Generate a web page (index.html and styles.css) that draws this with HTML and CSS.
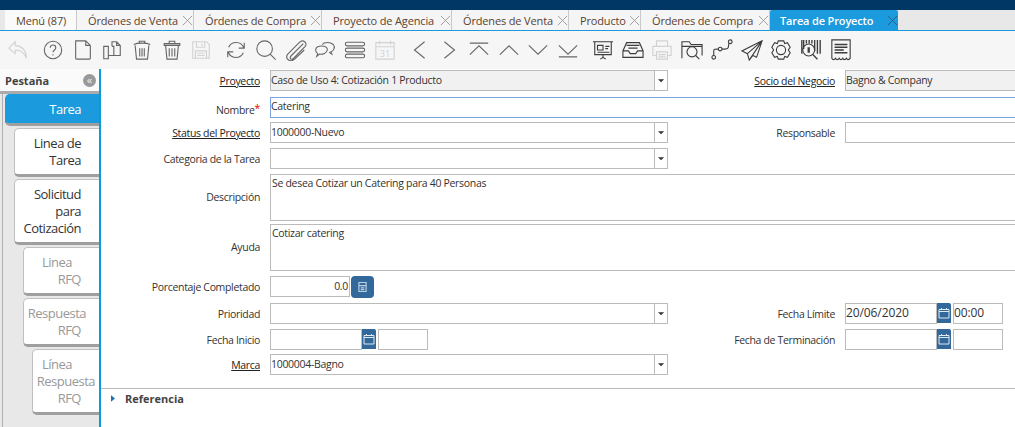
FILE: index.html
```html
<!DOCTYPE html>
<html lang="en">
<head>
    <meta charset="UTF-8">
    <title>Tarea de Proyecto</title>
    <link rel="stylesheet" href="styles.css">
</head>
<body>
    <svg class="defs">
        <symbol id="cal" viewBox="0 0 12 12">
            <path d="M1 2.500h10v8.500H1zM1 4.500h10M3.500 1v2M8.500 1v2" fill="none" stroke="#dfe9f2"/>
        </symbol>
        <symbol id="caret" viewBox="0 0 8 4">
            <path d="M0 0h7L3.500 3.500z" fill="#333"/>
        </symbol>
    </svg>

    <div class="topbar"></div>

    <div class="tabs">
        <div class="tab menu">Menú (87)</div>
        <div class="tab w1">Órdenes de Venta<svg class="x" viewBox="0 0 12 12"><path d="M1 1l10 10M11 1L1 11"/></svg></div>
        <div class="tab w2">Órdenes de Compra<svg class="x" viewBox="0 0 12 12"><path d="M1 1l10 10M11 1L1 11"/></svg></div>
        <div class="tab w3">Proyecto de Agencia<svg class="x" viewBox="0 0 12 12"><path d="M1 1l10 10M11 1L1 11"/></svg></div>
        <div class="tab w1">Órdenes de Venta<svg class="x" viewBox="0 0 12 12"><path d="M1 1l10 10M11 1L1 11"/></svg></div>
        <div class="tab w4">Producto<svg class="x" viewBox="0 0 12 12"><path d="M1 1l10 10M11 1L1 11"/></svg></div>
        <div class="tab w5">Órdenes de Compra<svg class="x" viewBox="0 0 12 12"><path d="M1 1l10 10M11 1L1 11"/></svg></div>
        <div class="tab current">Tarea de Proyecto<svg class="x" viewBox="0 0 12 12"><path d="M1 1l10 10M11 1L1 11"/></svg></div>
    </div>

    <div class="toolbar">
        <div class="tool off"><svg viewBox="0 0 24 24"><path d="M9 3L2 10l7 6v-4c6 0 10 3 12 9 0-8-4-13-12-14z"/></svg></div>
        <div class="tool gap"><svg viewBox="0 0 24 24"><circle cx="12" cy="12" r="9.500"/><path d="M9 9.500c0-4 6-4 6 0 0 2.500-3 2.500-3 5M12 16.500v1.500"/></svg></div>
        <div class="tool"><svg viewBox="0 0 24 24"><path d="M4 2h11l5 5v14a1 1 0 0 1-1 1H5a1 1 0 0 1-1-1zM15 2v5h5"/></svg></div>
        <div class="tool"><svg viewBox="0 0 24 24"><path d="M3 8h5v13.500H3zM8 18h13V7l-4-4h-5v5M17 3v4h4M12 8h2v10"/></svg></div>
        <div class="tool"><svg viewBox="0 0 24 24"><path d="M3 6c4-2 14-2 18 0M9 4.500V2.500h6v2M4.500 7l1.500 15h12l1.500-15M9.500 10v9M12 10v9M14.500 10v9"/></svg></div>
        <div class="tool"><svg viewBox="0 0 24 24"><path d="M3.500 5h17v2h-17zM9 5V2.500h6V5M5 7l1.500 15h11L19 7M9 10v9M12 10v9M15 10v9"/></svg></div>
        <div class="tool off"><svg viewBox="0 0 24 24"><path d="M3 3h15l3 3v15H3zM7 3v6h9V3M13 4.500v3M6 21v-8h12v8M8 15.500h8M8 18h8"/></svg></div>
        <div class="tool gap"><svg viewBox="0 0 24 24"><path d="M21 4v6h-6M3 20v-6h6M20.500 9.500A9 9 0 0 0 4 9M3.500 14.500A9 9 0 0 0 20 15"/></svg></div>
        <div class="tool"><svg viewBox="0 0 24 24"><circle cx="10.500" cy="10.500" r="8.500"/><path d="M16.500 16.500l6 6"/></svg></div>
        <div class="tool"><svg viewBox="0 0 24 24"><path d="M20 5L7 18c-3 3 0 5.500 2.500 3L22 8c3-4-2.500-8-6-4.500L3 16.500c-4 5 3 9.500 7.500 5.500L21 12"/></svg></div>
        <div class="tool"><svg viewBox="0 0 24 24"><path d="M9 6c2-3 9-3 12 0 2.500 3 .5 7-2.500 8l1 2.500-3-2M3 19l1-3c-3-2-3-6 0-7.500 4-2 11-.5 10.500 3.500-.5 3.500-5 5-8.500 4.500z"/></svg></div>
        <div class="tool"><svg viewBox="0 0 24 24"><rect x="1.500" y="3.500" width="21" height="4" rx="2"/><rect x="1.500" y="10" width="21" height="4" rx="2"/><rect x="1.500" y="16.500" width="21" height="4" rx="2"/></svg></div>
        <div class="tool off"><svg viewBox="0 0 24 24"><path d="M2 4h20v18H2zM2 8.500h20M6 2v4M18 2v4"/><text x="12" y="19.500" class="cal-num">31</text></svg></div>
        <div class="tool gap"><svg viewBox="0 0 24 24"><path d="M17 3L6 12l11 9"/></svg></div>
        <div class="tool"><svg viewBox="0 0 24 24"><path d="M7 3l11 9-11 9"/></svg></div>
        <div class="tool"><svg viewBox="0 0 24 24"><path d="M2 4.500h20M2 17L12 7.500 22 17"/></svg></div>
        <div class="tool"><svg viewBox="0 0 24 24"><path d="M2 17L12 7.500 22 17"/></svg></div>
        <div class="tool"><svg viewBox="0 0 24 24"><path d="M2 7l10 9.500L22 7"/></svg></div>
        <div class="tool"><svg viewBox="0 0 24 24"><path d="M2 7l10 9.500L22 7M2 19.500h20"/></svg></div>
        <div class="tool gap dark"><svg viewBox="0 0 24 24"><path d="M1 3h22M3 3v14h18V3M12 17v4M9 22l3-2 3 2M6 7h6v5H6zM14.500 8H19M14.500 10.500h3M6 14.500h13"/></svg></div>
        <div class="tool dark"><svg viewBox="0 0 24 24"><path d="M5 4h14l4 9v7H1v-7zM5 7h14M1 13h6l2 3h6l2-3h6M7 10h10"/></svg></div>
        <div class="tool off"><svg viewBox="0 0 24 24"><path d="M6 8V2h12v6M2 8h20v10h-4M6 18H2V8M6 14h12v8H6zM8 17h8M8 19.500h8"/></svg></div>
        <div class="tool dark"><svg viewBox="0 0 24 24"><path d="M1 21V3h8l2 3h12v12M1 8h22"/><circle cx="12" cy="14" r="5.500"/><path d="M16 18l4 4"/></svg></div>
        <div class="tool dark"><svg viewBox="0 0 24 24"><circle cx="3" cy="20" r="2"/><circle cx="10" cy="11" r="2"/><circle cx="21" cy="3" r="2"/><path d="M3 18v-5c0-2 1-2 5-2M12 11h3c4 0 4-1 4.500-6.500"/></svg></div>
        <div class="tool dark"><svg viewBox="0 0 24 24"><path d="M23 2L1 13l6 3 2 7 4-5 4 2zM23 2L7 16M23 2L9 23"/></svg></div>
        <div class="tool dark"><svg viewBox="0 0 24 24"><path d="M9 2h6l1 3 3-1 3 5-2 3 2 3-3 5-3-1-1 3H9l-1-3-3 1-3-5 2-3-2-3 3-5 3 1z"/><circle cx="12" cy="12" r="5"/></svg></div>
        <div class="tool dark"><svg viewBox="0 0 24 24"><path d="M2 1v15M4 1v10M7 1v4M10 1v4M13 1v4M16 1v12M19 1v15M22 1v15" stroke-width="1.500"/><circle cx="9.500" cy="12" r="6.500"/><path d="M9.500 9v6" stroke-width="2.500"/><path d="M14 17l5 5" stroke-width="1.500"/></svg></div>
        <div class="tool dark"><svg viewBox="0 0 24 24"><path d="M2 1h20v20c-2 2-3 2-4 0-2 2-3 2-4 0-1 2-3 2-4 0-1 2-3 2-4 0-1 2-3 2-4 0z"/><path d="M5 6h14M5 9h14M5 12h10M5 15h14" stroke-width="1.500"/></svg></div>
    </div>

    <div class="content">
        <aside class="side">
            <div class="side-head">
                <b>Pestaña</b>
                <span class="collapse">«</span>
            </div>
            <div class="side-tabs">
                <div class="stab active lvl0"><span>Tarea</span></div>
                <div class="stab lvl1 h2"><span>Linea de</span><span>Tarea</span></div>
                <div class="stab lvl1 h3"><span>Solicitud</span><span>para</span><span>Cotización</span></div>
                <div class="stab lvl2 h2 dim"><span class="in9">Linea</span><span>RFQ</span></div>
                <div class="stab lvl2 h2 dim"><span class="out5">Respuesta</span><span>RFQ</span></div>
                <div class="stab lvl3 h3 dim"><span class="in9">Línea</span><span class="out14">Respuesta</span><span>RFQ</span></div>
            </div>
        </aside>

        <main class="main">
            <form class="form" action="#">
                <label class="lbl link">Proyecto</label>
                <div class="combo ro"><span class="val">Caso de Uso 4: Cotización 1 Producto</span><i class="drop"><svg><use href="#caret"/></svg></i></div>
                <label class="lbl link">Socio del Negocio</label>
                <div class="field ro"><span class="val">Bagno &amp; Company</span></div>

                <label class="lbl">Nombre<em>*</em></label>
                <div class="field focus wide"><span class="val">Catering</span></div>

                <label class="lbl link">Status del Proyecto</label>
                <div class="combo"><span class="val">1000000-Nuevo</span><i class="drop"><svg><use href="#caret"/></svg></i></div>
                <label class="lbl">Responsable</label>
                <div class="field"></div>

                <label class="lbl">Categoria de la Tarea</label>
                <div class="combo full"><i class="drop"><svg><use href="#caret"/></svg></i></div>

                <label class="lbl mid">Descripción</label>
                <div class="field wide area"><span class="val">Se desea Cotizar un Catering para 40 Personas</span></div>

                <label class="lbl mid">Ayuda</label>
                <div class="field wide area"><span class="val">Cotizar catering</span></div>

                <label class="lbl">Porcentaje Completado</label>
                <div class="full num-row">
                    <div class="field num"><span class="val">0.0</span></div>
                    <span class="calc"><svg viewBox="0 0 10 12"><path d="M1 1h8v10H1zM1 4.500h8M3 7h4M3 9h4" fill="none" stroke="#b9cfe2" stroke-width="1.300"/></svg></span>
                </div>

                <label class="lbl">Prioridad</label>
                <div class="combo"><i class="drop"><svg><use href="#caret"/></svg></i></div>
                <label class="lbl">Fecha Límite</label>
                <div class="date-row">
                    <div class="field date big"><span class="val">20/06/2020</span></div>
                    <span class="cal-btn"><svg><use href="#cal"/></svg></span>
                    <div class="field time big"><span class="val">00:00</span></div>
                </div>

                <label class="lbl">Fecha Inicio</label>
                <div class="date-row">
                    <div class="field date"></div>
                    <span class="cal-btn"><svg><use href="#cal"/></svg></span>
                    <div class="field time"></div>
                </div>
                <label class="lbl">Fecha de Terminación</label>
                <div class="date-row">
                    <div class="field date"></div>
                    <span class="cal-btn"><svg><use href="#cal"/></svg></span>
                    <div class="field time"></div>
                </div>

                <label class="lbl link">Marca</label>
                <div class="combo full"><span class="val">1000004-Bagno</span><i class="drop"><svg><use href="#caret"/></svg></i></div>
            </form>

            <div class="group-head">
                <svg viewBox="0 0 5 8"><path d="M0 0l5 4-5 4z" fill="#1b6fb5"/></svg>
                <b>Referencia</b>
            </div>
        </main>
    </div>
</body>
</html>
```

FILE: styles.css
```css
* {
    box-sizing: border-box;
}

html, body {
    margin: 0;
    height: 427px;
    overflow: hidden;
    background: #fff;
    font-family: "Open Sans", "Noto Sans", sans-serif;
    color: #333;
}

.defs {
    display: none;
}

.topbar {
    height: 10px;
    background: #003764;
}

/* ventanas abiertas */
.tabs {
    display: flex;
    height: 21px;
    background: #e8e8e8;
    border-bottom: 1px solid #1b9ade;
    padding-left: 5px;
}

.tab {
    display: flex;
    align-items: center;
    height: 20px;
    padding-left: 11px;
    background: #f5f5f5;
    border-right: 1px solid #c9c9c9;
    font-size: 11px;
    letter-spacing: -0.15px;
    color: #59432f;
    white-space: nowrap;
}

.tab.menu { width: 72px; background: #fafafa; }
.tab.w1 { width: 117px; }
.tab.w2 { width: 128px; }
.tab.w3 { width: 130px; }
.tab.w4 { width: 72px; }
.tab.w5 { width: 129px; }

.tab .x {
    width: 11px;
    height: 11px;
    margin-left: auto;
    fill: none;
    stroke: #999;
    stroke-width: 1;
}

.tab.current {
    width: 128px;
    padding-left: 10px;
    background: #1b9ade;
    color: #fff;
    font-weight: 600;
    border-right: 0;
    border-radius: 2px 2px 0 0;
}

.tab.current .x {
    stroke: #2b5a7c;
}

/* barra de herramientas */
.toolbar {
    display: flex;
    align-items: center;
    height: 38px;
    padding-left: 3px;
    background: #f6f6f6;
}

.tool {
    display: flex;
    justify-content: center;
    flex: 0 0 29.7px;
}

.tool.gap {
    margin-left: 5.3px;
}

.tool svg {
    width: 22px;
    height: 22px;
    fill: none;
    stroke: #666;
    stroke-width: 1.200;
}

.tool.off svg {
    stroke: #d2d2d2;
}

.tool.dark svg {
    stroke: #3d3d3d;
}

.cal-num {
    font-size: 10px;
    text-anchor: middle;
    fill: #d2d2d2;
    stroke: none;
}

.content {
    display: flex;
    height: 358px;
}

/* pestañas laterales */
.side {
    flex: 0 0 99px;
    min-width: 0;
    background: #e8e8e8;
}

.side-head {
    display: flex;
    align-items: center;
    justify-content: space-between;
    height: 25px;
    padding: 0 3px 0 5px;
    background: #fafafa;
    border-bottom: 3px solid #ababab;
    font-size: 11px;
    color: #444;
}

.collapse {
    width: 13px;
    height: 13px;
    border-radius: 50%;
    background: #999;
    color: #eee;
    font-size: 11px;
    line-height: 11px;
    text-align: center;
}

.side-tabs {
    height: 333px;
    margin-left: 2px;
    padding-left: 2px;
    border-left: 1px solid #b0b0b0;
    display: flex;
    flex-direction: column;
}

.stab {
    background: #fff;
    border: 1px solid #c0c0c0;
    border-right: 0;
    border-bottom: 3px solid #9f9f9f;
    border-radius: 5px 0 0 5px;
    padding: 6px 18px 0 0;
    font-size: 13px;
    letter-spacing: -0.5px;
    line-height: 17px;
    text-align: right;
    color: #333;
}

.stab span {
    display: block;
    white-space: nowrap;
}

.stab .in9 { margin-right: 9px; }
.stab .out5 { margin-right: -5px; }
.stab .out14 { margin-right: -14px; }

.stab.lvl0 { height: 32px; margin-bottom: 2px; }
.stab.lvl1 { margin-left: 9px; }
.stab.lvl2 { margin-left: 18px; }
.stab.lvl3 { margin-left: 27px; }
.stab.h2 { height: 49px; margin-bottom: 2px; }
.stab.h3 { height: 66px; margin-bottom: 2px; }
.stab.dim { color: #999; }

.stab.active {
    background: #1b9ade;
    border-color: #1b9ade;
    border-bottom-color: #9f9f9f;
    color: #fff;
}

/* ventana del registro */
.main {
    flex: 1;
    min-width: 0;
    border-left: 2px solid #0a9ade;
    padding-top: 1px;
}

.form {
    display: grid;
    grid-template-columns: 158px 398px 157px 190px;
    grid-template-rows: 27px 25px 26px 26px 50px 52px 27px 26px 25px 35px;
    column-gap: 10px;
    width: 950px;
    padding-left: 1px;
    height: 319px;
    border-bottom: 1px solid #bbb;
}

.lbl {
    justify-self: end;
    align-self: start;
    height: 21px;
    font-size: 10.500px;
    letter-spacing: -0.33px;
    line-height: 22px;
    color: #333;
    white-space: nowrap;
}

.lbl.mid {
    height: 47px;
    line-height: 47px;
}

.lbl.link {
    color: #222;
    text-decoration: underline;
}

.lbl em {
    font-style: normal;
    color: #e00;
    vertical-align: 2px;
}

.field, .combo {
    position: relative;
    height: 21px;
    border: 1px solid #bbb;
    background: #fff;
    font-size: 10.500px;
    letter-spacing: -0.3px;
    line-height: 18px;
    color: #333;
    overflow: hidden;
}

.val {
    white-space: nowrap;
}

.ro {
    background: #f1f1f1;
    line-height: 19px;
}

.wide {
    grid-column: 2 / 5;
    width: 760px;
}

.full {
    grid-column: 2 / 5;
    width: 398px;
}

.focus {
    border-color: #7ba3e0;
    border-width: 1px 0 1px 1px;
    line-height: 17px;
}

.area {
    height: 47px;
    line-height: 17px;
}

.area .val {
    padding-left: 1px;
}

.drop {
    position: absolute;
    top: 0;
    right: 0;
    bottom: 0;
    width: 13px;
    border-left: 1px solid #bbb;
    background: #fff;
    display: flex;
    align-items: center;
    justify-content: center;
}

.drop svg {
    width: 7px;
    height: 4px;
}

.num-row, .date-row {
    display: flex;
    align-items: flex-start;
}

.num {
    width: 80px;
    text-align: right;
    padding-right: 1px;
}

.calc {
    display: flex;
    align-items: center;
    justify-content: center;
    width: 23px;
    height: 22px;
    margin-left: 1px;
    border-radius: 4px;
    background: #33689b;
}

.calc svg {
    width: 9px;
    height: 12px;
}

.date {
    width: 92px;
}

.cal-btn {
    display: flex;
    align-items: center;
    justify-content: center;
    width: 14px;
    height: 20px;
    background: #33689b;
    border-radius: 0 2px 0 0;
}

.cal-btn svg {
    width: 12px;
    height: 12px;
}

.time {
    width: 50px;
    margin-left: 2px;
}

.big {
    font-size: 12px;
    letter-spacing: -0.1px;
}

.group-head {
    display: flex;
    align-items: center;
    gap: 10px;
    height: 18px;
    padding-left: 10px;
    font-size: 11px;
    color: #444;
}

.group-head svg {
    width: 4px;
    height: 7px;
}
```
